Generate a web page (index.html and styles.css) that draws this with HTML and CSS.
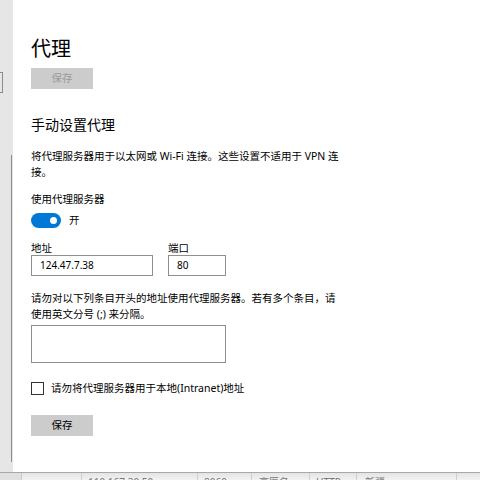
FILE: index.html
```html
<!DOCTYPE html>
<html lang="zh-CN">
<head>
<meta charset="utf-8">
<title>代理</title>
<link rel="stylesheet" href="styles.css">
</head>
<body>
<div class="window">
  <div class="side">
    <div class="side-box"></div>
    <div class="side-scroll"></div>
  </div>
  <main class="panel">
    <h1 class="title">代理</h1>
    <button class="btn btn-disabled">保存</button>
    <h2 class="section">手动设置代理</h2>
    <p class="text p1">将代理服务器用于以太网或 Wi-Fi 连接。这些设置不适用于 VPN 连接。</p>
    <div class="text label-use">使用代理服务器</div>
    <div class="toggle-row">
      <span class="toggle"><span class="knob"></span></span>
      <span class="text toggle-label">开</span>
    </div>
    <div class="fields">
      <div class="field">
        <div class="text flabel">地址</div>
        <div class="input addr">124.47.7.38</div>
      </div>
      <div class="field">
        <div class="text flabel">端口</div>
        <div class="input port">80</div>
      </div>
    </div>
    <p class="text p2">请勿对以下列条目开头的地址使用代理服务器。若有多个条目，请使用英文分号 (;) 来分隔。</p>
    <div class="textarea"></div>
    <div class="check-row">
      <span class="checkbox"></span>
      <span class="text">请勿将代理服务器用于本地(Intranet)地址</span>
    </div>
    <button class="btn btn-save">保存</button>
  </main>
</div>
<div class="table-strip">
  <div class="cell c0"></div>
  <div class="cell c1"></div>
  <div class="cell c2">110.167.30.50</div>
  <div class="cell c3">8060</div>
  <div class="cell c4">高匿名</div>
  <div class="cell c5">HTTP</div>
  <div class="cell c6">新疆</div>
  <div class="cell c7"></div>
</div>
</body>
</html>
```
FILE: styles.css
```css
* { box-sizing: border-box; }
html, body {
  margin: 0;
  padding: 0;
  width: 480px;
  height: 480px;
  overflow: hidden;
  background: #fff;
  font-family: "Noto Sans", "Noto Sans CJK SC", sans-serif;
  color: #000;
}
.window {
  display: flex;
  height: 472px;
}
.side {
  width: 13px;
  flex: none;
  background: #e6e6e6;
  padding-top: 72px;
}
.side-box {
  width: 3px;
  height: 21px;
  border: 1px solid #8a8a8a;
  border-left: none;
}
.side-scroll {
  margin-top: 62px;
  margin-left: 11px;
  width: 1px;
  height: 307px;
  background: #8c8c8c;
}
.panel {
  flex: 1;
  padding: 36px 0 0 18px;
  display: flex;
  flex-direction: column;
  align-items: flex-start;
}
.title {
  margin: 0;
  font-size: 20px;
  line-height: 26px;
  font-weight: 400;
  color: #000;
}
.btn {
  width: 62px;
  height: 21px;
  border: none;
  padding: 0;
  background: #cccccc;
  font-family: "Noto Sans", "Noto Sans CJK SC", sans-serif;
  font-size: 10.5px;
  line-height: 21px;
  text-align: center;
}
.btn-disabled {
  margin-top: 6px;
  color: #9a9a9a;
}
.btn-save {
  margin-top: 20px;
  color: #000;
}
.section {
  margin: 26px 0 0;
  font-size: 14px;
  line-height: 20px;
  font-weight: 400;
  color: #000;
}
.text {
  font-size: 10.5px;
  line-height: 16px;
  color: #000;
}
.p1 {
  margin: 13px 0 0;
  width: 312px;
}
.label-use {
  margin-top: 11px;
}
.toggle-row {
  margin-top: 5px;
  display: flex;
  align-items: center;
  gap: 8px;
  height: 16px;
}
.toggle {
  width: 30px;
  height: 15px;
  border-radius: 8px;
  background: #0078d7;
  display: flex;
  align-items: center;
  justify-content: flex-end;
  padding-right: 4px;
}
.knob {
  width: 7px;
  height: 7px;
  border-radius: 50%;
  background: #fff;
}
.fields {
  margin-top: 13px;
  display: flex;
  gap: 15px;
}
.flabel {
  line-height: 14px;
}
.input {
  height: 21px;
  border: 1px solid #8f8f8f;
  font-size: 10px;
  line-height: 19px;
  padding-left: 8px;
  color: #000;
}
.addr { width: 122px; }
.port { width: 58px; }
.p2 {
  margin: 14px 0 0;
  width: 312px;
}
.textarea {
  margin-top: 3px;
  width: 195px;
  height: 38px;
  border: 1px solid #8f8f8f;
}
.check-row {
  margin-top: 18px;
  display: flex;
  align-items: center;
  gap: 7px;
  height: 14px;
}
.checkbox {
  width: 13px;
  height: 13px;
  border: 1.5px solid #333;
}
.table-strip {
  height: 8px;
  display: flex;
  overflow: hidden;
  border-top: 1px solid #a8a8a8;
  background: linear-gradient(#e4e4e4, #f2f2f2);
}
.cell {
  height: 8px;
  font-size: 10px;
  line-height: 14px;
  padding-top: 2px;
  color: #777;
  border-right: 1px solid #d0d0d0;
  overflow: visible;
  white-space: nowrap;
}
.c0 { width: 22px; background: #e0e0e0; border-right-color: #c8c8c8; }
.c1 { width: 60px; }
.c2 { width: 116px; padding-left: 6px; }
.c3 { width: 54px; padding-left: 6px; }
.c4 { width: 58px; padding-left: 7px; }
.c5 { width: 47px; padding-left: 6px; }
.c6 { width: 100px; padding-left: 8px; }
.c7 { flex: 1; border-right: none; }
```
